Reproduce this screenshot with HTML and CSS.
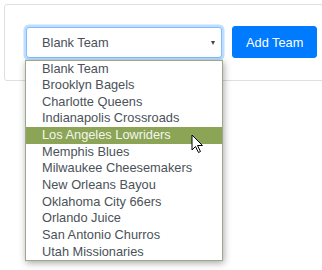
FILE: index.html
```html
<!DOCTYPE html>
<html lang="en">
<head>
    <meta charset="UTF-8">
    <title>Add Team</title>
    <link rel="stylesheet" href="styles.css">
</head>
<body>
    <div class="page">
        <div class="card">
            <div class="picker">
                <div class="select">
                    <span>Blank Team</span>
                    <span class="caret"></span>
                </div>
                <ul class="options">
                    <li>Blank Team</li>
                    <li>Brooklyn Bagels</li>
                    <li>Charlotte Queens</li>
                    <li>Indianapolis Crossroads</li>
                    <li class="hover">Los Angeles Lowriders</li>
                    <li>Memphis Blues</li>
                    <li>Milwaukee Cheesemakers</li>
                    <li>New Orleans Bayou</li>
                    <li>Oklahoma City 66ers</li>
                    <li>Orlando Juice</li>
                    <li>San Antonio Churros</li>
                    <li>Utah Missionaries</li>
                </ul>
                <svg class="pointer" width="13" height="20" viewBox="0 0 13 20">
                    <path d="M1 1 L1 16 L4.5 12.5 L7.5 18.5 L9.5 17.5 L6.5 11.5 L11.5 11.5 Z" fill="#fff" stroke="#000" stroke-width="1" stroke-linejoin="round"/>
                </svg>
            </div>
            <button class="btn">Add Team</button>
        </div>
    </div>
</body>
</html>
```

FILE: styles.css
```css
* {
    margin: 0;
    padding: 0;
    box-sizing: border-box;
}

body {
    font-family: "Liberation Sans", Arial, sans-serif;
    font-size: 12.8px;
    background: #fff;
}

.page {
    width: 322px;
    height: 270px;
    padding: 4px;
    overflow: hidden;
}

.card {
    display: flex;
    align-items: center;
    gap: 10px;
    width: max-content;
    padding: 21px 21px 22px;
    border: 1px solid #dfdfdf;
    border-radius: 3px;
    background: #fff;
}

.picker {
    position: relative;
}

.select {
    width: 196px;
    height: 31px;
    display: flex;
    align-items: center;
    justify-content: space-between;
    padding: 0 6px 0 15px;
    color: #495057;
    background: #fff;
    border: 1px solid #80bdff;
    border-radius: 3px;
    box-shadow: 0 0 0 2.5px rgba(0, 123, 255, 0.25);
}

.caret {
    width: 0;
    height: 0;
    border-left: 2.5px solid transparent;
    border-right: 2.5px solid transparent;
    border-top: 4px solid #444;
    margin-top: 1px;
}

.options {
    position: absolute;
    top: calc(100% + 2px);
    left: -1px;
    width: 198px;
    list-style: none;
    background: #fff;
    border: 1px solid #9ca88a;
    box-shadow: 1px 2px 7px rgba(0, 0, 0, 0.35);
}

.options li {
    height: 16.67px;
    line-height: 16px;
    padding-left: 16px;
    color: #4a5259;
    white-space: nowrap;
}

.options li.hover {
    background: #8ba455;
    color: #f4f6ee;
}

.pointer {
    position: absolute;
    left: 165px;
    top: 107px;
}

.btn {
    height: 32px;
    padding: 0 13px;
    font-family: inherit;
    font-size: 12.8px;
    color: #fff;
    background: #007bff;
    border: 1px solid #007bff;
    border-radius: 3px;
}
```
